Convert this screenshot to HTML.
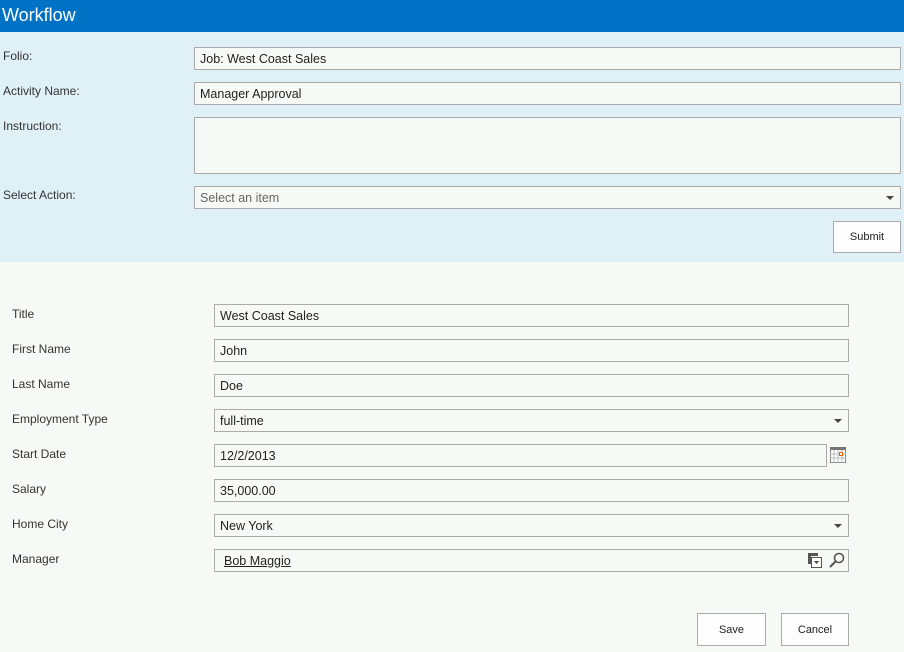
<!DOCTYPE html><html><head><style>
*{margin:0;padding:0;box-sizing:border-box}
body{width:904px;height:652px;background:#f5faf7;font-family:"Liberation Sans",sans-serif;font-size:12px;color:#333;position:relative;overflow:hidden}
.hdr{position:absolute;left:0;top:0;width:904px;height:32px;background:#0072c6;color:#fff;font-size:18px;line-height:30px;padding-left:2px}
.panel{position:absolute;left:0;top:32px;width:904px;height:230px;background:#dff1f7}
.l{position:absolute;font-size:12px;color:#333}
.i{position:absolute;border:1px solid #ababab;background:#f5faf7;font-size:12.5px;color:#222;padding-left:5px;line-height:22px}
.arr{position:absolute;right:6px;top:9px;width:0;height:0;border-left:4px solid transparent;border-right:4px solid transparent;border-top:4px solid #444}
.b{position:absolute;border:1px solid #ababab;background:#fdfdfd;font-size:11px;text-align:center;color:#222}
</style></head><body>
<div class="hdr">Workflow</div>
<div class="panel"></div>
<div class="l" style="left:3px;top:49px">Folio:</div>
<div class="i" style="left:194px;top:47px;width:707px;height:23px">Job: West Coast Sales</div>
<div class="l" style="left:3px;top:84px">Activity Name:</div>
<div class="i" style="left:194px;top:82px;width:707px;height:23px">Manager Approval</div>
<div class="l" style="left:3px;top:119px">Instruction:</div>
<div class="i" style="left:194px;top:117px;width:707px;height:57px"></div>
<div class="l" style="left:3px;top:188px">Select Action:</div>
<div class="i" style="left:194px;top:186px;width:707px;height:23px;color:#666">Select an item<div class="arr"></div></div>
<div class="b" style="left:833px;top:221px;width:68px;height:32px;line-height:31px">Submit</div>

<div class="l" style="left:12px;top:307px">Title</div>
<div class="i" style="left:214px;top:304px;width:635px;height:23px">West Coast Sales</div>
<div class="l" style="left:12px;top:342px">First Name</div>
<div class="i" style="left:214px;top:339px;width:635px;height:23px">John</div>
<div class="l" style="left:12px;top:377px">Last Name</div>
<div class="i" style="left:214px;top:374px;width:635px;height:23px">Doe</div>
<div class="l" style="left:12px;top:412px">Employment Type</div>
<div class="i" style="left:214px;top:409px;width:635px;height:23px">full-time<div class="arr"></div></div>
<div class="l" style="left:12px;top:447px">Start Date</div>
<div class="i" style="left:214px;top:444px;width:613px;height:23px">12/2/2013</div>
<svg style="position:absolute;left:830px;top:447px" width="16" height="16"><rect x="0.5" y="0.5" width="15" height="15" fill="#fff" stroke="#888"/><rect x="0" y="0" width="16" height="3" fill="#777"/><path d="M4 3v13M8 3v13M12 3v13M0 7h16M0 11h16" stroke="#bbb"/><rect x="9.5" y="5.5" width="3" height="3" fill="#fff" stroke="#e06000"/></svg>
<div class="l" style="left:12px;top:482px">Salary</div>
<div class="i" style="left:214px;top:479px;width:635px;height:23px">35,000.00</div>
<div class="l" style="left:12px;top:517px">Home City</div>
<div class="i" style="left:214px;top:514px;width:635px;height:23px">New York<div class="arr"></div></div>
<div class="l" style="left:12px;top:552px">Manager</div>
<div class="i" style="left:214px;top:549px;width:635px;height:23px;padding-left:9px"><span style="text-decoration:underline">Bob Maggio</span></div>
<svg style="position:absolute;left:808px;top:553px" width="16" height="16"><path d="M0 0h10v3H3v8H0z" fill="#555"/><rect x="3.5" y="4.5" width="10" height="10" fill="#fff" stroke="#555"/><path d="M6 8h5l-2.5 3z" fill="#444"/></svg>
<svg style="position:absolute;left:829px;top:552px" width="16" height="17"><circle cx="10" cy="6" r="4.5" fill="none" stroke="#555" stroke-width="1.6"/><path d="M7 9L1 15" stroke="#555" stroke-width="2"/></svg>
<div class="b" style="left:697px;top:613px;width:69px;height:33px;line-height:32px">Save</div>
<div class="b" style="left:781px;top:613px;width:68px;height:33px;line-height:32px">Cancel</div>
</body></html>
